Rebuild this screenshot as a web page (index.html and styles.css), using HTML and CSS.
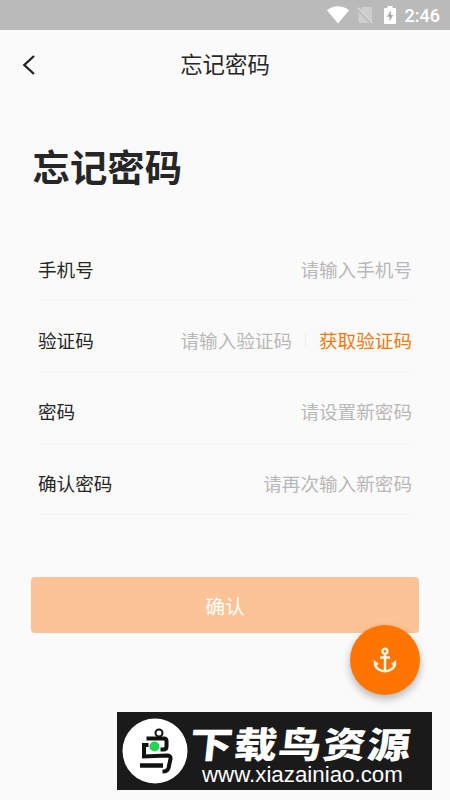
FILE: index.html
```html
<!DOCTYPE html>
<html lang="zh-CN">
<head>
<meta charset="utf-8">
<title>忘记密码</title>
<link rel="stylesheet" href="styles.css">
</head>
<body>
<div class="screen">
  <div class="status">
    <svg class="wifi" width="22" height="18" viewBox="0 0 22 18"><path d="M0 4.200C6.500-1.200 15.500-1.200 22 4.200L11 17.500Z" fill="#fff"/></svg>
    <svg class="sim" width="16" height="18" viewBox="0 0 16 18"><path d="M5.500 1H14Q15 1 15 2V16L3.500 4Z" fill="#cecece"/><path d="M1.500 6L12.500 17H2.500Q1.500 17 1.500 16Z" fill="#cecece"/><path d="M.5 1.500L15.500 17" stroke="#d8d8d8" stroke-width="1.200"/></svg>
    <svg class="battery" width="12" height="18" viewBox="0 0 12 18"><path d="M1 2H3.500V0H8.500V2H11Q12 2 12 3V17Q12 18 11 18H1Q0 18 0 17V3Q0 2 1 2Z" fill="#fff"/><path d="M7 4.500L2.800 10.800H5.400V15.500L9.400 9H7Z" fill="#aaa"/></svg>
    <span class="clock">2:46</span>
  </div>
  <header class="bar">
    <svg class="back" width="14" height="22" viewBox="0 0 14 22"><path d="M12 2L2.300 11L12 20" fill="none" stroke="#222" stroke-width="2.300"/></svg>
    <span class="title">忘记密码</span>
  </header>
  <h1 class="heading">忘记密码</h1>
  <div class="form">
    <div class="row"><span class="label">手机号</span><span class="hint">请输入手机号</span></div>
    <div class="row"><span class="label">验证码</span><span class="hint">请输入验证码</span><span class="split"></span><span class="code">获取验证码</span></div>
    <div class="row"><span class="label">密码</span><span class="hint">请设置新密码</span></div>
    <div class="row"><span class="label">确认密码</span><span class="hint">请再次输入新密码</span></div>
  </div>
  <div class="submit">确认</div>
  <div class="fab">
    <svg width="30" height="30" viewBox="0 0 24 24"><path fill="#fff7e8" d="M17 15l1.550 1.550c-.96 1.690-3.330 3.040-5.550 3.370V11h3V9h-3V7.820C14.160 7.400 15 6.300 15 5c0-1.650-1.350-3-3-3S9 3.350 9 5c0 1.300.84 2.400 2 2.820V9H8v2h3v8.920c-2.220-.33-4.590-1.680-5.550-3.370L7 15l-4-3v3c0 3.880 4.920 7 9 7s9-3.120 9-7v-3l-4 3zM12 4c.55 0 1 .45 1 1s-.45 1-1 1-1-.45-1-1 .45-1 1-1z"/></svg>
  </div>
  <div class="banner">
    <svg class="logo" width="66" height="66" viewBox="0 0 66 66">
      <circle cx="33" cy="33" r="32.500" fill="#fff"/>
      <g fill="none" stroke="#111">
        <circle cx="37" cy="15" r="3.500" stroke-width="2"/>
        <path d="M26.500 22.500V20.500H42Q44.500 20.500 44.500 23V28.500Q44.500 31.500 41.500 31.500H38.500" stroke-width="4"/>
        <path d="M26.500 27H22V38.500L45 37.500Q49 37.500 48.500 41L46.500 50Q45.500 53.500 40.500 53.500" stroke-width="4"/>
        <path d="M18 47.500H41" stroke-width="4.500"/>
      </g>
      <circle cx="32.500" cy="28.500" r="5" fill="#22d455"/>
    </svg>
    <div class="words">
      <div class="brand">下载鸟资源</div>
      <div class="site">www.xiazainiao.com</div>
    </div>
  </div>
</div>
</body>
</html>
```
FILE: styles.css
```css
body {
  margin: 0;
  font-family: "Noto Sans CJK SC", sans-serif;
  background: #fafafa;
  color: #262626;
}
.screen {
  position: relative;
  display: flex;
  flex-direction: column;
  width: 450px;
  height: 800px;
  overflow: hidden;
  white-space: nowrap;
}
.status {
  display: flex;
  justify-content: flex-end;
  align-items: center;
  box-sizing: border-box;
  height: 30px;
  padding-right: 10px;
  background: #bababa;
}
.sim { margin-left: 8px; }
.battery { margin-left: 11px; }
.clock {
  margin: 2px 0 0 9px;
  font: 500 18px/20px Roboto, sans-serif;
  color: #fff;
}
.bar {
  display: grid;
  grid-template-columns: 1fr auto 1fr;
  align-items: center;
  height: 70px;
}
.back { margin-left: 22px; }
.title { margin-bottom: 4px; font-size: 22.4px; line-height: 30px; }
.heading {
  margin: 39px 0 0 32.5px;
  font-size: 37.4px;
  line-height: 54px;
  font-weight: 700;
}
.form { margin: 37px 38px 0; }
.row {
  display: flex;
  align-items: center;
  box-sizing: border-box;
  height: 71.300px;
  padding-top: 6px;
  border-bottom: 1px solid #f4f4f4;
  font-size: 18.600px;
}
.hint { margin-left: auto; color: #b8b8b8; }
.split { width: 1px; height: 17px; margin: 0 13px 0 13px; background: #f0f0f0; }
.code { color: #f5780f; }
.submit {
  margin: 62px 31px 0;
  height: 56px;
  border-radius: 4px;
  background: #fcc396;
  color: #fff;
  font-size: 19.800px;
  line-height: 58px;
  text-align: center;
}
.fab {
  position: absolute;
  left: 350px;
  top: 625px;
  display: flex;
  align-items: center;
  justify-content: center;
  width: 70px;
  height: 70px;
  border-radius: 50%;
  background: #ff7500;
  box-shadow: 0 4px 8px rgba(0, 0, 0, .28);
}
.banner {
  display: flex;
  align-items: center;
  box-sizing: border-box;
  width: 315px;
  height: 78px;
  margin: auto 0 10px 117px;
  padding-left: 5px;
  background: #1a1a1a;
  color: #fff;
}
.words { margin: 6px 0 0 2px; }
.brand {
  width: 185px;
  font-size: 36px;
  line-height: 38px;
  font-weight: 900;
  letter-spacing: 1px;
  transform: scaleX(1.2) skewX(-5deg);
  transform-origin: left center;
}
.site {
  margin: 2px 0 0 12px;
  font: 22.300px/23px "Liberation Sans", sans-serif;
}
```
